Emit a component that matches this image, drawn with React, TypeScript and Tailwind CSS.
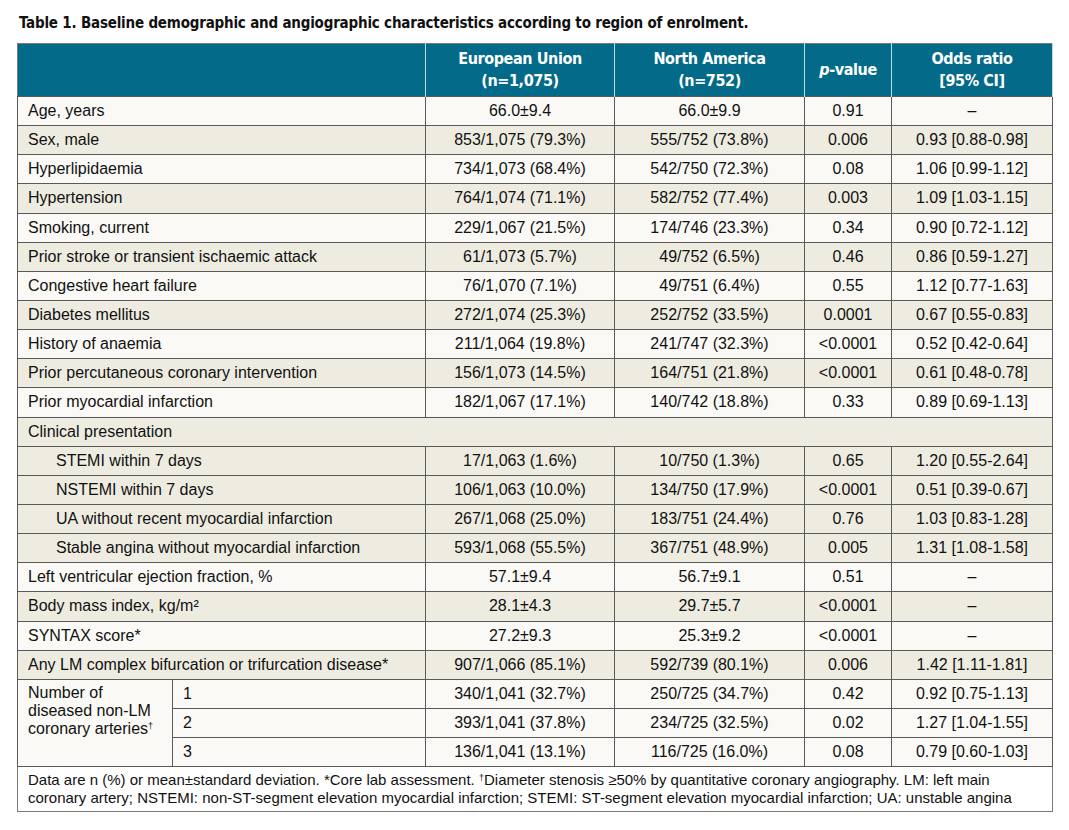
import React from "react";

type Row = {
  label: string;
  eu?: string;
  na?: string;
  p?: string;
  or?: string;
  shade?: boolean;
  indent?: boolean;
  span?: boolean;
};

const rows: Row[] = [
  { label: "Age, years", eu: "66.0±9.4", na: "66.0±9.9", p: "0.91", or: "–" },
  { label: "Sex, male", eu: "853/1,075 (79.3%)", na: "555/752 (73.8%)", p: "0.006", or: "0.93 [0.88-0.98]", shade: true },
  { label: "Hyperlipidaemia", eu: "734/1,073 (68.4%)", na: "542/750 (72.3%)", p: "0.08", or: "1.06 [0.99-1.12]" },
  { label: "Hypertension", eu: "764/1,074 (71.1%)", na: "582/752 (77.4%)", p: "0.003", or: "1.09 [1.03-1.15]", shade: true },
  { label: "Smoking, current", eu: "229/1,067 (21.5%)", na: "174/746 (23.3%)", p: "0.34", or: "0.90 [0.72-1.12]" },
  { label: "Prior stroke or transient ischaemic attack", eu: "61/1,073 (5.7%)", na: "49/752 (6.5%)", p: "0.46", or: "0.86 [0.59-1.27]", shade: true },
  { label: "Congestive heart failure", eu: "76/1,070 (7.1%)", na: "49/751 (6.4%)", p: "0.55", or: "1.12 [0.77-1.63]" },
  { label: "Diabetes mellitus", eu: "272/1,074 (25.3%)", na: "252/752 (33.5%)", p: "0.0001", or: "0.67 [0.55-0.83]", shade: true },
  { label: "History of anaemia", eu: "211/1,064 (19.8%)", na: "241/747 (32.3%)", p: "<0.0001", or: "0.52 [0.42-0.64]" },
  { label: "Prior percutaneous coronary intervention", eu: "156/1,073 (14.5%)", na: "164/751 (21.8%)", p: "<0.0001", or: "0.61 [0.48-0.78]", shade: true },
  { label: "Prior myocardial infarction", eu: "182/1,067 (17.1%)", na: "140/742 (18.8%)", p: "0.33", or: "0.89 [0.69-1.13]" },
  { label: "Clinical presentation", shade: true, span: true },
  { label: "STEMI within 7 days", eu: "17/1,063 (1.6%)", na: "10/750 (1.3%)", p: "0.65", or: "1.20 [0.55-2.64]", shade: true, indent: true },
  { label: "NSTEMI within 7 days", eu: "106/1,063 (10.0%)", na: "134/750 (17.9%)", p: "<0.0001", or: "0.51 [0.39-0.67]", shade: true, indent: true },
  { label: "UA without recent myocardial infarction", eu: "267/1,068 (25.0%)", na: "183/751 (24.4%)", p: "0.76", or: "1.03 [0.83-1.28]", shade: true, indent: true },
  { label: "Stable angina without myocardial infarction", eu: "593/1,068 (55.5%)", na: "367/751 (48.9%)", p: "0.005", or: "1.31 [1.08-1.58]", shade: true, indent: true },
  { label: "Left ventricular ejection fraction, %", eu: "57.1±9.4", na: "56.7±9.1", p: "0.51", or: "–" },
  { label: "Body mass index, kg/m²", eu: "28.1±4.3", na: "29.7±5.7", p: "<0.0001", or: "–", shade: true },
  { label: "SYNTAX score*", eu: "27.2±9.3", na: "25.3±9.2", p: "<0.0001", or: "–" },
  { label: "Any LM complex bifurcation or trifurcation disease*", eu: "907/1,066 (85.1%)", na: "592/739 (80.1%)", p: "0.006", or: "1.42 [1.11-1.81]", shade: true },
];

const vessels = [
  { n: "1", eu: "340/1,041 (32.7%)", na: "250/725 (34.7%)", p: "0.42", or: "0.92 [0.75-1.13]" },
  { n: "2", eu: "393/1,041 (37.8%)", na: "234/725 (32.5%)", p: "0.02", or: "1.27 [1.04-1.55]" },
  { n: "3", eu: "136/1,041 (13.1%)", na: "116/725 (16.0%)", p: "0.08", or: "0.79 [0.60-1.03]" },
];

const condensed = { fontFamily: '"Liberation Sans Narrow", "DejaVu Sans Condensed", "Liberation Sans", sans-serif', fontStretch: "condensed" };

const cell = "border border-[#5a5a5a] h-[29.15px] p-0 align-middle";
const num = `${cell} text-center`;
const head = "border-x border-x-[#b8dbe6] px-2 text-center font-bold text-white";

export default function App() {
  return (
    <div className="min-h-[830px] bg-white pl-[17px] pt-[13px] text-[#111]" style={{ fontFamily: '"Liberation Sans", Arial, sans-serif' }}>
      <h1 className="mb-[10px] pl-[2px] text-[15px] font-bold leading-[20px] tracking-[-0.2px] text-[#111]" style={condensed}>
        Table 1. Baseline demographic and angiographic characteristics according to region of enrolment.
      </h1>
      <table className="w-[1035px] table-fixed border-collapse border border-[#7a7a7a] text-[16px] leading-[18px]">
        <colgroup>
          <col className="w-[155px]" />
          <col className="w-[253px]" />
          <col className="w-[189px]" />
          <col className="w-[190px]" />
          <col className="w-[87px]" />
          <col className="w-[161px]" />
        </colgroup>
        <thead>
          <tr className="h-[53px] bg-[#036a89] text-[16px] leading-[22px] tracking-[-0.4px]" style={condensed}>
            <th colSpan={2} className="border-l-0 px-2" />
            <th className={head}>
              European Union
              <br />
              (n=1,075)
            </th>
            <th className={head}>
              North America
              <br />
              (n=752)
            </th>
            <th className={head}>
              <i>p</i>-value
            </th>
            <th className={head}>
              Odds ratio
              <br />
              [95% CI]
            </th>
          </tr>
        </thead>
        <tbody>
          {rows.map((r) => (
            <tr key={r.label} className={r.shade ? "bg-[#eeece1]" : "bg-[#faf9f5]"}>
              {r.span ? (
                <td colSpan={6} className={`${cell} pl-[10px]`}>
                  {r.label}
                </td>
              ) : (
                <>
                  <td colSpan={2} className={`${cell} ${r.indent ? "pl-[38px]" : "pl-[10px]"}`}>
                    {r.label}
                  </td>
                  <td className={num}>{r.eu}</td>
                  <td className={num}>{r.na}</td>
                  <td className={num}>{r.p}</td>
                  <td className={num}>{r.or}</td>
                </>
              )}
            </tr>
          ))}
          {vessels.map((v, i) => (
            <tr key={v.n} className="bg-[#faf9f5]">
              {i === 0 && (
                <td rowSpan={3} className={`${cell} pl-[10px] pt-[4px] align-top leading-[18px]`}>
                  Number of
                  <br />
                  diseased non-LM
                  <br />
                  coronary arteries<sup className="text-[9px]">†</sup>
                </td>
              )}
              <td className={`${cell} pl-[10px]`}>{v.n}</td>
              <td className={num}>{v.eu}</td>
              <td className={num}>{v.na}</td>
              <td className={num}>{v.p}</td>
              <td className={num}>{v.or}</td>
            </tr>
          ))}
        </tbody>
        <tfoot>
          <tr className="bg-white">
            <td colSpan={6} className="h-[45px] border border-[#7a7a7a] px-[10px] text-[15px] leading-[18px]">
              Data are n (%) or mean±standard deviation. *Core lab assessment. <sup className="text-[9px]">†</sup>Diameter stenosis ≥50% by quantitative coronary angiography. LM: left main
              <br />
              coronary artery; NSTEMI: non-ST-segment elevation myocardial infarction; STEMI: ST-segment elevation myocardial infarction; UA: unstable angina
            </td>
          </tr>
        </tfoot>
      </table>
    </div>
  );
}
